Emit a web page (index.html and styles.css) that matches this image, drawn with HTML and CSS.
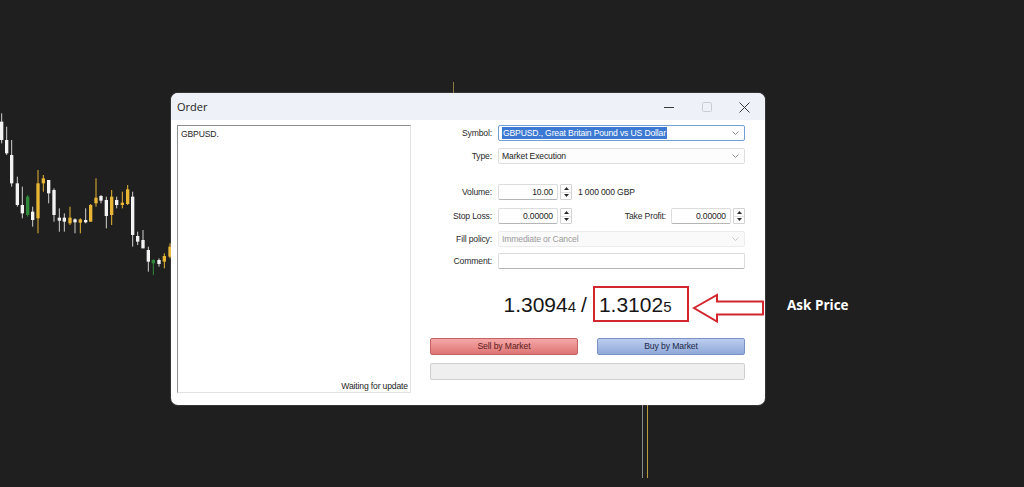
FILE: index.html
```html
<!DOCTYPE html>
<html lang="en">
<head>
<meta charset="utf-8">
<title>Order</title>
<link rel="stylesheet" href="styles.css">
</head>
<body>
<div class="desk">
  <svg class="chart" viewBox="0 0 540 540" width="180" height="180" aria-hidden="true">
    <g class="c w"><rect x="3.5" y="40" width="3" height="90"/><rect x="0" y="65" width="10" height="55"/></g>
    <g class="c w"><rect x="18.5" y="80" width="3" height="85"/><rect x="15" y="120" width="10" height="40"/></g>
    <g class="c w"><rect x="33.5" y="120" width="3" height="140"/><rect x="30" y="165" width="10" height="85"/></g>
    <g class="c w"><rect x="50.5" y="230" width="3" height="90"/><rect x="47" y="250" width="10" height="65"/></g>
    <g class="c w"><rect x="65.5" y="260" width="3" height="95"/><rect x="62" y="315" width="10" height="25"/></g>
    <g class="c gr"><rect x="81.5" y="285" width="3" height="65"/><rect x="78" y="290" width="10" height="55"/></g>
    <g class="c w"><rect x="96.5" y="320" width="3" height="60"/><rect x="93" y="335" width="10" height="25"/></g>
    <g class="c g"><rect x="112.5" y="210" width="3" height="190"/><rect x="109" y="250" width="10" height="105"/></g>
    <g class="c g"><rect x="128.5" y="225" width="3" height="50"/><rect x="125" y="235" width="10" height="15"/></g>
    <g class="c w"><rect x="144.5" y="240" width="3" height="70"/><rect x="141" y="240" width="10" height="40"/></g>
    <g class="c w"><rect x="160.5" y="265" width="3" height="100"/><rect x="157" y="270" width="10" height="75"/></g>
    <g class="c w"><rect x="176.5" y="325" width="3" height="70"/><rect x="173" y="353" width="10" height="9"/></g>
    <g class="c w"><rect x="191.5" y="340" width="3" height="55"/><rect x="188" y="353" width="10" height="12"/></g>
    <g class="c g"><rect x="208.5" y="320" width="3" height="55"/><rect x="205" y="353" width="10" height="17"/></g>
    <g class="c w"><rect x="223.5" y="355" width="3" height="45"/><rect x="220" y="358" width="10" height="9"/></g>
    <g class="c g"><rect x="239.5" y="355" width="3" height="45"/><rect x="236" y="358" width="10" height="10"/></g>
    <g class="c w"><rect x="255.5" y="325" width="3" height="45"/><rect x="252" y="360" width="10" height="7"/></g>
    <g class="c g"><rect x="270.5" y="312" width="3" height="53"/><rect x="267" y="315" width="10" height="50"/></g>
    <g class="c g"><rect x="286.5" y="235" width="3" height="85"/><rect x="283" y="293" width="10" height="17"/></g>
    <g class="c w"><rect x="301.5" y="285" width="3" height="25"/><rect x="298" y="288" width="10" height="14"/></g>
    <g class="c w"><rect x="317.5" y="290" width="3" height="95"/><rect x="314" y="300" width="10" height="48"/></g>
    <g class="c g"><rect x="333.5" y="270" width="3" height="105"/><rect x="330" y="290" width="10" height="55"/></g>
    <g class="c w"><rect x="348.5" y="290" width="3" height="35"/><rect x="345" y="300" width="10" height="15"/></g>
    <g class="c g"><rect x="365.5" y="275" width="3" height="50"/><rect x="362" y="308" width="10" height="7"/></g>
    <g class="c g"><rect x="381.5" y="255" width="3" height="60"/><rect x="378" y="268" width="10" height="44"/></g>
    <g class="c w"><rect x="396.5" y="275" width="3" height="165"/><rect x="393" y="290" width="10" height="115"/></g>
    <g class="c w"><rect x="411.5" y="395" width="3" height="40"/><rect x="408" y="408" width="10" height="17"/></g>
    <g class="c w"><rect x="427.5" y="390" width="3" height="55"/><rect x="424" y="420" width="10" height="25"/></g>
    <g class="c w"><rect x="443.5" y="440" width="3" height="75"/><rect x="440" y="450" width="10" height="35"/></g>
    <g class="c gr"><rect x="458.5" y="478" width="3" height="47"/><rect x="455" y="480" width="10" height="10"/></g>
    <g class="c w"><rect x="475.5" y="475" width="3" height="25"/><rect x="472" y="480" width="10" height="12"/></g>
    <g class="c g"><rect x="491.5" y="460" width="3" height="45"/><rect x="488" y="468" width="10" height="17"/></g>
    <g class="c g"><rect x="508.5" y="430" width="3" height="45"/><rect x="505" y="440" width="10" height="30"/></g>
  </svg>

  <div class="wick wick-top"></div>
  <div class="wick wick-gray"></div>
  <div class="wick wick-gold"></div>

  <section class="dialog">
    <header class="titlebar">
      <span class="title">Order</span>
      <div class="winctl">
        <span class="ctl"><svg width="10" height="10" viewBox="0 0 10 10"><line x1="0" y1="5.5" x2="10" y2="5.5" class="ico"/></svg></span>
        <span class="ctl"><svg width="10" height="10" viewBox="0 0 10 10"><rect x="0.5" y="0.5" width="9" height="9" rx="1" class="ico dim"/></svg></span>
        <span class="ctl"><svg width="11" height="11" viewBox="0 0 11 11"><path d="M0.5 0.5 L10.5 10.5 M10.5 0.5 L0.5 10.5" class="ico"/></svg></span>
      </div>
    </header>

    <div class="body">
      <div class="ticks">
        <div class="tick-sym">GBPUSD.</div>
        <div class="tick-status">Waiting for update</div>
      </div>

      <div class="form">
        <div class="row r-symbol">
          <span class="lbl">Symbol:</span>
          <div class="select focus">
            <span class="sel-text">GBPUSD., Great Britain Pound vs US Dollar</span>
            <svg class="chev" width="7" height="4" viewBox="0 0 7 4"><polyline points="0.5,0.5 3.5,3.5 6.5,0.5"/></svg>
          </div>
        </div>

        <div class="row r-type">
          <span class="lbl">Type:</span>
          <div class="select">
            <span>Market Execution</span>
            <svg class="chev" width="7" height="4" viewBox="0 0 7 4"><polyline points="0.5,0.5 3.5,3.5 6.5,0.5"/></svg>
          </div>
        </div>

        <div class="row r-volume">
          <span class="lbl">Volume:</span>
          <div class="num">10.00</div>
          <div class="spin">
            <span class="half"><svg width="5" height="3" viewBox="0 0 5 3"><polygon points="0,3 2.5,0 5,3"/></svg></span>
            <span class="half"><svg width="5" height="3" viewBox="0 0 5 3"><polygon points="0,0 5,0 2.5,3"/></svg></span>
          </div>
          <span class="note">1 000 000 GBP</span>
        </div>

        <div class="row r-sl">
          <span class="lbl">Stop Loss:</span>
          <div class="num">0.00000</div>
          <div class="spin">
            <span class="half"><svg width="5" height="3" viewBox="0 0 5 3"><polygon points="0,3 2.5,0 5,3"/></svg></span>
            <span class="half"><svg width="5" height="3" viewBox="0 0 5 3"><polygon points="0,0 5,0 2.5,3"/></svg></span>
          </div>
          <span class="lbl-tp">Take Profit:</span>
          <div class="num">0.00000</div>
          <div class="spin">
            <span class="half"><svg width="5" height="3" viewBox="0 0 5 3"><polygon points="0,3 2.5,0 5,3"/></svg></span>
            <span class="half"><svg width="5" height="3" viewBox="0 0 5 3"><polygon points="0,0 5,0 2.5,3"/></svg></span>
          </div>
        </div>

        <div class="row r-fill">
          <span class="lbl">Fill policy:</span>
          <div class="select disabled">
            <span>Immediate or Cancel</span>
            <svg class="chev" width="7" height="4" viewBox="0 0 7 4"><polyline points="0.5,0.5 3.5,3.5 6.5,0.5"/></svg>
          </div>
        </div>

        <div class="row r-comment">
          <span class="lbl">Comment:</span>
          <div class="text-input"></div>
        </div>

        <div class="prices">
          <span class="price">1.3094<small>4</small></span>
          <span class="slash">/</span>
          <span class="price">1.3102<small>5</small></span>
        </div>

        <div class="buttons">
          <button class="btn sell">Sell by Market</button>
          <button class="btn buy">Buy by Market</button>
        </div>

        <div class="progress"></div>
      </div>
    </div>
  </section>

  <div class="ask-box"></div>
  <svg class="ask-arrow" width="76" height="32" viewBox="0 0 76 32" aria-hidden="true">
    <polygon points="2,17 25,4 25,10.5 71,10.5 71,23.5 25,23.5 25,30.5"/>
  </svg>
  <div class="ask-label">Ask Price</div>
</div>
</body>
</html>
```

FILE: styles.css
```css
* { box-sizing: border-box; }

html, body {
  margin: 0;
  padding: 0;
  background: #1f1f1f;
}

body {
  font-family: "Liberation Sans", Arial, sans-serif;
  overflow: hidden;
}

.desk {
  position: relative;
  width: 1024px;
  height: 487px;
  background: #1f1f1f;
}

/* chart fragment behind the dialog */
.chart {
  position: absolute;
  left: 0;
  top: 100px;
}
.c.w { fill: #f3f3f3; }
.c.w rect:first-child { fill: #cfcfcf; }
.c.g { fill: #e8b534; }
.c.gr { fill: #2e8a3a; }

.wick { position: absolute; width: 1px; }
.wick-top { left: 453px; top: 82px; height: 11px; background: #8a7a44; }
.wick-gray { left: 642px; top: 405px; height: 73px; background: #8d8d8d; }
.wick-gold { left: 647px; top: 405px; height: 73px; background: #b89b3c; }

/* dialog window */
.dialog {
  position: absolute;
  left: 171px;
  top: 93px;
  width: 594px;
  height: 312px;
  background: #ffffff;
  border-radius: 7px;
  overflow: hidden;
  box-shadow: 0 0 0 1px rgba(255, 255, 255, 0.1);
  display: flex;
  flex-direction: column;
}

.titlebar {
  height: 27px;
  flex: none;
  background: #eef2f8;
  display: flex;
  align-items: center;
  justify-content: space-between;
  padding-left: 6px;
}
.title {
  font-family: "Open Sans", "Liberation Sans", sans-serif;
  font-size: 11px;
  color: #1b1b1b;
}
.winctl { display: flex; height: 100%; }
.ctl {
  width: 38px;
  height: 100%;
  display: flex;
  align-items: center;
  justify-content: center;
  padding-top: 1px;
}
.ctl:last-child { width: 39px; padding-right: 2px; }
.ico { stroke: #3a3a3a; stroke-width: 1; fill: none; }
.ico.dim { stroke: #c9ccd1; }

.body {
  flex: 1;
  display: flex;
  padding: 5px 0 0 6px;
  font-size: 8.6px;
  letter-spacing: -0.15px;
  color: #1e1e1e;
}

.ticks {
  width: 234px;
  height: 268px;
  flex: none;
  border: 1px solid #e2e2e2;
  border-left-color: #8f8f8f;
  border-top-color: #8f8f8f;
  display: flex;
  flex-direction: column;
  justify-content: space-between;
  padding: 3px 2px 1px 3px;
}
.tick-status { text-align: right; }

.form {
  width: 315px;
  margin-left: 19px;
  display: flex;
  flex-direction: column;
}

.row {
  display: flex;
  align-items: center;
  height: 16px;
}
.r-type { margin-top: 7px; }
.r-volume { margin-top: 20px; }
.r-sl { margin-top: 8px; }
.r-fill { margin-top: 7px; }
.r-comment { margin-top: 6px; }

.lbl {
  width: 62px;
  flex: none;
  text-align: right;
  margin-right: 6px;
  color: #2a2a2a;
}

.select {
  flex: 1;
  height: 16px;
  display: flex;
  align-items: center;
  justify-content: space-between;
  border: 1px solid #dedede;
  border-radius: 2px;
  background: #fdfdfd;
  padding: 0 5px 0 3px;
}
.select.focus { border-color: #6f9fd3; background: #ffffff; }
.select.disabled { color: #9a9a9a; background: #fafafa; border-color: #ececec; }
.sel-text {
  background: #3b79d3;
  color: #ffffff;
  padding: 1px 1px;
  line-height: 10px;
}
.chev { fill: none; stroke: #8a8a8a; stroke-width: 1; }
.select.disabled .chev { stroke: #c8c8c8; }

.num {
  width: 60px;
  height: 16px;
  flex: none;
  border: 1px solid #dcdcdc;
  border-bottom-color: #b5b5b5;
  border-radius: 2px;
  text-align: right;
  padding: 0 4px;
  line-height: 14px;
}
.spin {
  width: 12px;
  height: 16px;
  flex: none;
  margin-left: 2px;
  border: 1px solid #d3d3d3;
  border-radius: 1px;
  display: flex;
  flex-direction: column;
}
.half {
  flex: 1;
  display: flex;
  align-items: center;
  justify-content: center;
}
.half:first-child { border-bottom: 1px solid #e3e3e3; }
.half svg { fill: #2a2a2a; }
.note { margin-left: 6px; }

.lbl-tp {
  margin-left: auto;
  margin-right: 5px;
  color: #2a2a2a;
}

.text-input {
  flex: 1;
  height: 16px;
  border: 1px solid #dcdcdc;
  border-bottom-color: #b5b5b5;
  border-radius: 2px;
  background: #ffffff;
}

.prices {
  margin-top: 21px;
  height: 30px;
  display: flex;
  justify-content: center;
  align-items: baseline;
  padding-left: 0;
  padding-top: 3px;
  font-size: 21px;
  letter-spacing: 0;
  color: #161616;
}
.price small { font-size: 15px; }
.slash { margin: 0 12px 0 5px; }

.buttons {
  margin-top: 18px;
  display: flex;
  justify-content: space-between;
}
.btn {
  width: 148px;
  height: 17px;
  border-radius: 2px;
  font-family: inherit;
  font-size: 8.6px;
  letter-spacing: -0.1px;
  padding: 0;
  line-height: 15px;
}
.btn.sell {
  background: linear-gradient(#f5a8a8, #de7474);
  border: 1px solid #c56262;
  color: #5a1c1c;
}
.btn.buy {
  background: linear-gradient(#bccdee, #90a9d9);
  border: 1px solid #7b93c4;
  color: #1c2746;
}

.progress {
  margin-top: 8px;
  height: 17px;
  background: #efefef;
  border: 1px solid #cfcfcf;
  border-radius: 2px;
}

/* annotation overlay */
.ask-box {
  position: absolute;
  left: 593px;
  top: 286px;
  width: 96px;
  height: 36px;
  border: 2px solid #d3262d;
}
.ask-arrow {
  position: absolute;
  left: 692px;
  top: 291px;
}
.ask-arrow polygon {
  fill: none;
  stroke: #d3262d;
  stroke-width: 2;
  stroke-linejoin: miter;
}
.ask-label {
  position: absolute;
  left: 787px;
  top: 296px;
  font-family: "Open Sans", "Liberation Sans", sans-serif;
  font-weight: 700;
  font-size: 13.5px;
  color: #ffffff;
}
```
